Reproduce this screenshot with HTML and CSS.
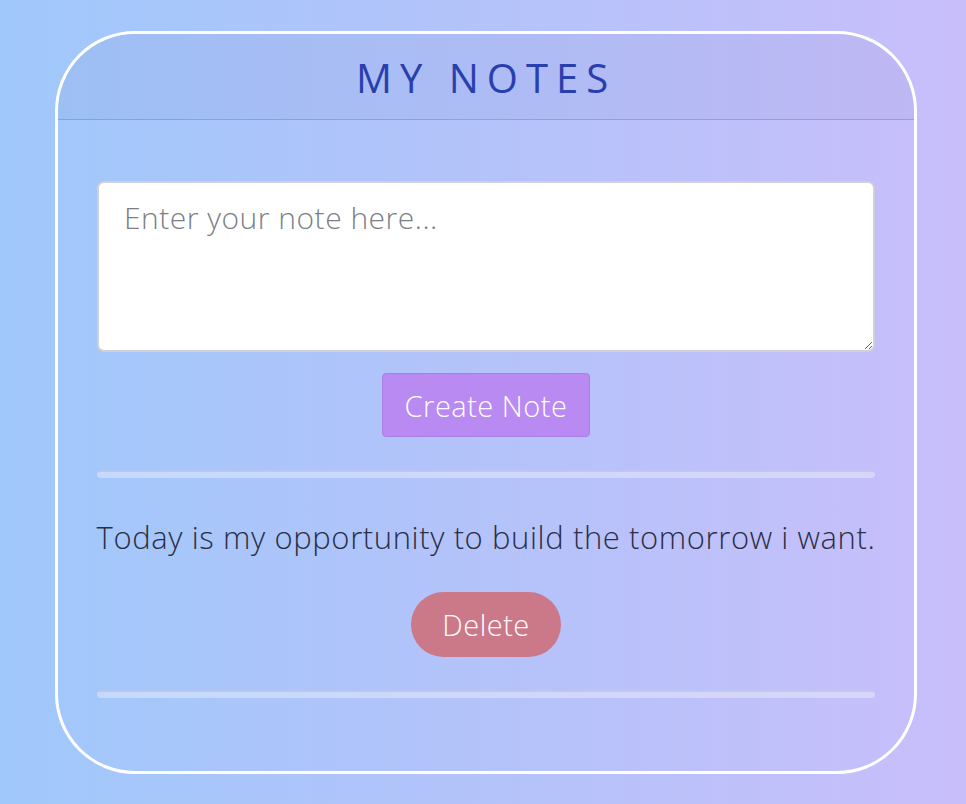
FILE: index.html
```html
<!DOCTYPE html>
<html lang="en">
<head>
<meta charset="utf-8">
<title>My Notes</title>
<link rel="stylesheet" href="styles.css">
</head>
<body>
<main class="app">
  <header class="app-header">
    <h1 class="title">MY NOTES</h1>
  </header>
  <section class="content">
    <textarea class="note-input" placeholder="Enter your note here..."></textarea>
    <button class="btn-create">Create Note</button>
    <hr class="divider">
    <div class="note">
      <p class="note-text">Today is my opportunity to build the tomorrow i want.</p>
      <button class="btn-delete">Delete</button>
    </div>
    <hr class="divider">
  </section>
</main>
</body>
</html>
```
FILE: styles.css
```css
* { box-sizing: border-box; }
html, body { height: 100%; }
body {
  margin: 0;
  background: linear-gradient(90deg, #a0c8fa 0%, #c8befa 100%);
  font-family: "Open Sans", "Lato", sans-serif;
  font-weight: 300;
  padding-top: 31px;
}
.app {
  width: 862px;
  margin: 0 0 0 55px;
  border: 3px solid #ffffff;
  border-radius: 80px;
  overflow: hidden;
  height: 743px;
}
.app-header {
  height: 86px;
  background: rgba(60, 60, 140, 0.05);
  border-bottom: 1px solid rgba(60, 70, 150, 0.25);
  display: flex;
  align-items: center;
  justify-content: center;
}
.title {
  margin: 0;
  font-size: 40px;
  font-weight: 400;
  letter-spacing: 0.2em;
  color: #2a3fae;
  padding-top: 2px;
}
.content {
  padding: 61px 39px 0;
  display: flex;
  flex-direction: column;
  align-items: center;
}
.note-input {
  width: 778px;
  height: 171px;
  border: 2px solid #d0d0d8;
  border-radius: 7px;
  background: #fff;
  padding: 14px 25px;
  font-family: inherit;
  font-weight: 300;
  font-size: 30px;
  letter-spacing: 0.5px;
  color: #333;
  resize: vertical;
  display: block;
}
.note-input::placeholder { color: #7b7f88; }
.btn-create {
  margin-top: 21px;
  width: 208px;
  height: 64px;
  background: #b98af2;
  border: 1px solid #a97ee8;
  border-radius: 4px;
  color: #ffffff;
  font-family: inherit;
  font-weight: 300;
  font-size: 29px;
  letter-spacing: 0.5px;
  padding: 0;
}
.divider {
  width: 778px;
  height: 8px;
  margin: 33px 0 0;
  border: none;
  border-top: 2px solid rgba(120, 130, 190, 0.2);
  border-radius: 4px;
  background: rgba(255, 255, 255, 0.35);
}
.note {
  display: flex;
  flex-direction: column;
  align-items: center;
  width: 778px;
}
.note-text {
  margin: 40px 0 0;
  font-size: 31px;
  letter-spacing: 0.6px;
  line-height: 38px;
  color: #2b2f45;
  text-align: center;
  white-space: nowrap;
}
.btn-delete {
  margin-top: 36px;
  width: 150px;
  height: 65px;
  border: none;
  border-radius: 33px;
  background: #cb7889;
  color: #ffffff;
  font-family: inherit;
  font-weight: 300;
  font-size: 29px;
  letter-spacing: 0.5px;
  padding: 0;
}
.note + .divider { margin-top: 33px; }
```
